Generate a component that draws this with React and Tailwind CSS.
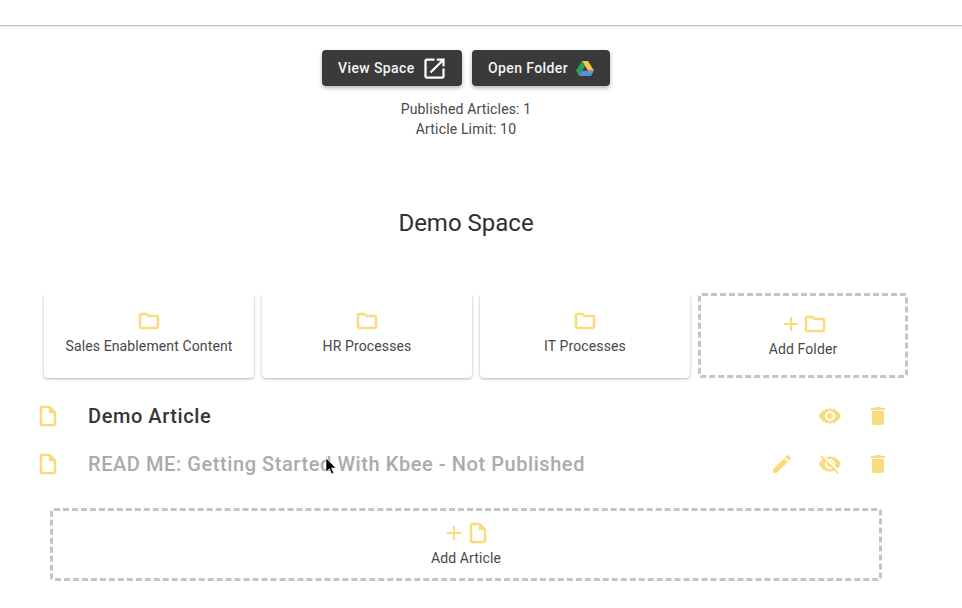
import React from "react";

const FOLDER =
  "M9.17 6l2 2H20v10H4V6h5.17M10 4H4c-1.1 0-1.99.9-1.99 2L2 18c0 1.1.9 2 2 2h16c1.1 0 2-.9 2-2V8c0-1.1-.9-2-2-2h-8l-2-2z";
const FILE =
  "M14 2H6c-1.1 0-1.99.9-1.99 2L4 20c0 1.1.89 2 1.99 2H18c1.1 0 2-.9 2-2V8l-6-6zM6 20V4h7v5h5v11H6z";
const ADD = "M19 13h-6v6h-2v-6H5v-2h6V5h2v6h6v2z";
const EYE =
  "M12 4.5C7 4.5 2.73 7.61 1 12c1.73 4.39 6 7.5 11 7.5s9.27-3.11 11-7.5c-1.73-4.39-6-7.5-11-7.5zM12 17c-2.76 0-5-2.24-5-5s2.24-5 5-5 5 2.24 5 5-2.24 5-5 5zm0-8c-1.66 0-3 1.34-3 3s1.34 3 3 3 3-1.34 3-3-1.34-3-3-3z";
const EYE_OFF =
  "M12 7c2.76 0 5 2.24 5 5 0 .65-.13 1.26-.36 1.83l2.92 2.92c1.51-1.26 2.7-2.89 3.43-4.75-1.73-4.39-6-7.5-11-7.5-1.4 0-2.74.25-3.98.7l2.16 2.16C10.74 7.13 11.35 7 12 7zM2 4.27l2.28 2.28.46.46C3.08 8.3 1.78 10.02 1 12c1.73 4.39 6 7.5 11 7.5 1.55 0 3.03-.3 4.38-.84l.42.42L19.73 22 21 20.73 3.27 3 2 4.27zM7.53 9.8l1.55 1.55c-.05.21-.08.43-.08.65 0 1.66 1.34 3 3 3 .22 0 .44-.03.65-.08l1.55 1.55c-.67.33-1.41.53-2.2.53-2.76 0-5-2.24-5-5 0-.79.2-1.53.53-2.2zm4.31-.78l3.15 3.15.02-.16c0-1.66-1.34-3-3-3l-.17.01z";
const TRASH =
  "M6 19c0 1.1.9 2 2 2h8c1.1 0 2-.9 2-2V7H6v12zM19 4h-3.5l-1-1h-5l-1 1H5v2h14V4z";
const PENCIL =
  "M3 17.25V21h3.75L17.81 9.94l-3.75-3.75L3 17.25zM20.71 7.04c.39-.39.39-1.02 0-1.41l-2.34-2.34a.9959.9959 0 0 0-1.41 0l-1.83 1.83 3.75 3.75 1.83-1.83z";
const OPEN =
  "M19 19H5V5h7V3H5c-1.11 0-2 .9-2 2v14c0 1.1.89 2 2 2h14c1.1 0 2-.9 2-2v-7h-2v7zM14 3v2h3.59l-9.83 9.83 1.41 1.41L19 6.41V10h2V3h-7z";

function Icon({ d, className = "w-6 h-6 text-[#f8dc7c]" }) {
  return (
    <svg viewBox="0 0 24 24" fill="currentColor" className={`shrink-0 ${className}`}>
      <path d={d} />
    </svg>
  );
}

// outlined icons read heavier in the picture, so they get a thin extra stroke
function OutlineIcon({ d }) {
  return (
    <svg viewBox="0 0 24 24" fill="#f8dc7c" stroke="#f8dc7c" strokeWidth="0.5" className="w-6 h-6 shrink-0">
      <path d={d} />
    </svg>
  );
}

// Google Drive triangle
function DriveLogo() {
  return (
    <svg viewBox="0 0 24 22" className="w-[18px] h-[17px] shrink-0">
      <path d="M8 1h8l8 13h-8z" fill="#f6c944" />
      <path d="M8 1l-8 13 4 7 8-13z" fill="#2c9f5f" />
      <path d="M4 21h16l4-7H8z" fill="#5a8fdc" />
    </svg>
  );
}

function DarkButton({ label, gap, width, children }) {
  return (
    <button className={`flex items-center pl-4 h-9 ${gap} ${width} rounded bg-[#3a3a3a] text-[#f4f4f4] text-sm font-medium tracking-[0.4px] shadow-[0_2px_4px_rgba(0,0,0,0.3)]`}>
      {label}
      {children}
    </button>
  );
}

function FolderCard({ name }) {
  return (
    <div className="flex flex-col items-center w-[210px] h-[83px] pt-[14px] bg-white rounded-b shadow-[0_1px_3px_rgba(0,0,0,0.3)] [clip-path:inset(0_-6px_-6px_-6px)]">
      <OutlineIcon d={FOLDER} />
      <span className="mt-[3px] text-sm tracking-[0.12px] text-[#484848]">{name}</span>
    </div>
  );
}

function ArticleRow({ title, muted, actions }) {
  return (
    <div className="flex items-center h-12 pl-9 pr-[60px]">
      <OutlineIcon d={FILE} />
      <span className={`ml-7 flex-1 text-xl font-medium tracking-[0.57px] ${muted ? "text-[#ababab]" : "text-[#363636]"}`}>
        {title}
      </span>
      {actions.map((d) => (
        <span key={d} className="flex justify-center w-12">
          <Icon d={d} />
        </span>
      ))}
    </div>
  );
}

export default function App() {
  return (
    <div className="relative h-[608px] overflow-hidden bg-white font-['Roboto',sans-serif]">
      <div className="h-[26px] border-b border-[#c4c4c4] shadow-[0_1px_1px_rgba(0,0,0,0.08)]" />

      <div className="pr-[30px]">
        <div className="flex justify-center gap-[10px] mt-6">
          <DarkButton label="View Space" gap="gap-[6px]" width="w-[140px]">
            <Icon d={OPEN} className="w-[27px] h-[27px] text-white" />
          </DarkButton>
          <DarkButton label="Open Folder" gap="gap-2" width="w-[138px]">
            <DriveLogo />
          </DarkButton>
        </div>

        <div className="mt-[13px] text-center text-sm leading-[20px] tracking-[0.16px] text-[#484848]">
          <p>Published Articles: 1</p>
          <p>Article Limit: 10</p>
        </div>

        <h1 className="mt-[68px] text-center text-2xl leading-[32px] text-[#2f2f2f]">Demo Space</h1>
      </div>

      <div className="flex mt-[54px] pl-[44px] gap-2 h-[85px] items-end">
        <FolderCard name="Sales Enablement Content" />
        <FolderCard name="HR Processes" />
        <FolderCard name="IT Processes" />
        <div className="flex flex-col items-center justify-center w-[210px] h-[85px] rounded border-[3px] border-dashed border-[#c4c4c4]">
          <div className="flex items-center">
            <Icon d={ADD} />
            <OutlineIcon d={FOLDER} />
          </div>
          <span className="mt-[3px] text-sm tracking-[0.12px] text-[#484848]">Add Folder</span>
        </div>
      </div>

      <div className="mt-[14px]">
        <ArticleRow title="Demo Article" actions={[EYE, TRASH]} />
        <ArticleRow
          title="READ ME: Getting Started With Kbee - Not Published"
          muted
          actions={[PENCIL, EYE_OFF, TRASH]}
        />
      </div>

      <div className="flex flex-col items-center justify-center mx-[50px] w-[832px] h-[73px] mt-5 rounded border-[3px] border-dashed border-[#c4c4c4]">
        <div className="flex items-center">
          <Icon d={ADD} />
          <OutlineIcon d={FILE} />
        </div>
        <span className="mt-[3px] text-sm tracking-[0.12px] text-[#484848]">Add Article</span>
      </div>

      {/* mouse pointer over the second row */}
      <svg viewBox="0 0 12 18" className="absolute left-[325px] top-[458px] w-[12px] h-[18px]">
        <path d="M1 0v14l3.4-3.2L6.6 16l2.2-1-2.2-5H11z" fill="#000" stroke="#fff" strokeWidth="0.7" />
      </svg>
    </div>
  );
}
